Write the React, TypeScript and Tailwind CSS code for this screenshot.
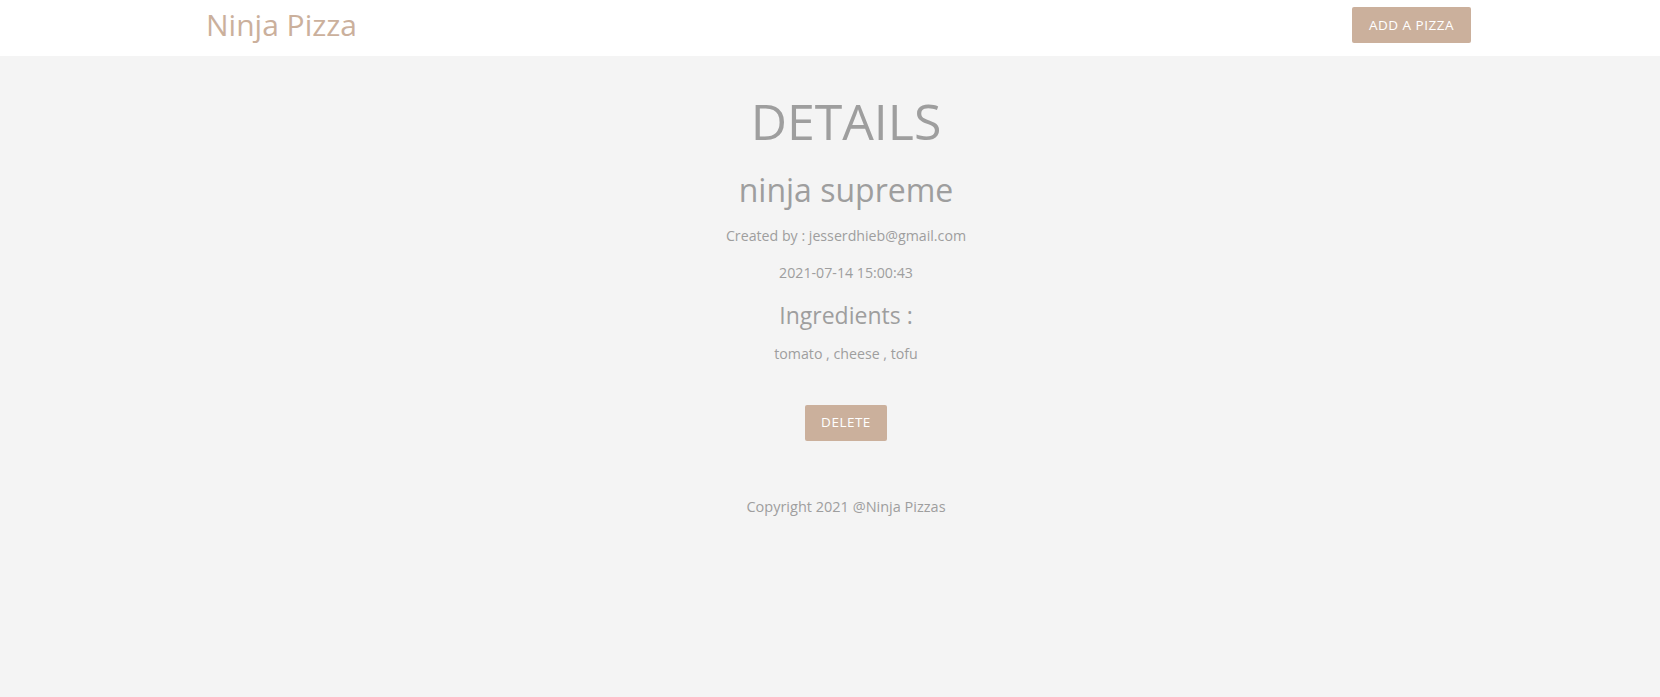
import React from "react";

const pizza = {
  title: "ninja supreme",
  email: "jesserdhieb@gmail.com",
  created_at: "2021-07-14 15:00:43",
  ingredients: "tomato , cheese , tofu",
};

export default function App() {
  return (
    <div
      className="min-h-screen bg-[#f4f4f4] text-[#9e9e9e]"
      style={{ fontFamily: '"Open Sans", "Noto Sans", sans-serif' }}
    >
      {/* Nav */}
      <nav className="h-14 bg-white">
        <div className="ml-[206px] w-[1280px] h-full flex items-start justify-between">
          <a href="#" className="mt-[10px] text-[30px] leading-none text-[#cbb09c]">
            Ninja Pizza
          </a>
          <a
            href="#"
            className="mt-[7px] mr-[15px] h-9 px-[17px] flex items-center rounded-[2px] bg-[#cbb09c] text-white text-[13.5px] tracking-[0.5px] uppercase"
          >
            Add a Pizza
          </a>
        </div>
      </nav>

      {/* Details */}
      <section className="ml-[206px] w-[1280px] flex flex-col items-center text-center">
        <h2 className="mt-[40px] text-[50px] leading-none">DETAILS</h2>
        <h4 className="mt-[28px] text-[32px] leading-none">{pizza.title}</h4>
        <p className="mt-[23px] text-[14.2px] leading-none">Created by : {pizza.email}</p>
        <p className="mt-[23px] text-[14.2px] leading-none">{pizza.created_at}</p>
        <h5 className="mt-[24px] text-[23px] leading-none">Ingredients :</h5>
        <p className="mt-[20px] text-[14.2px] leading-none">{pizza.ingredients}</p>
        <button className="mt-[43px] h-9 px-[16px] rounded-[2px] bg-[#cbb09c] text-white text-[13.5px] tracking-[0.5px] uppercase">
          Delete
        </button>
        <footer className="mt-[59px] text-[14.5px] leading-none">Copyright 2021 @Ninja Pizzas</footer>
      </section>
    </div>
  );
}
